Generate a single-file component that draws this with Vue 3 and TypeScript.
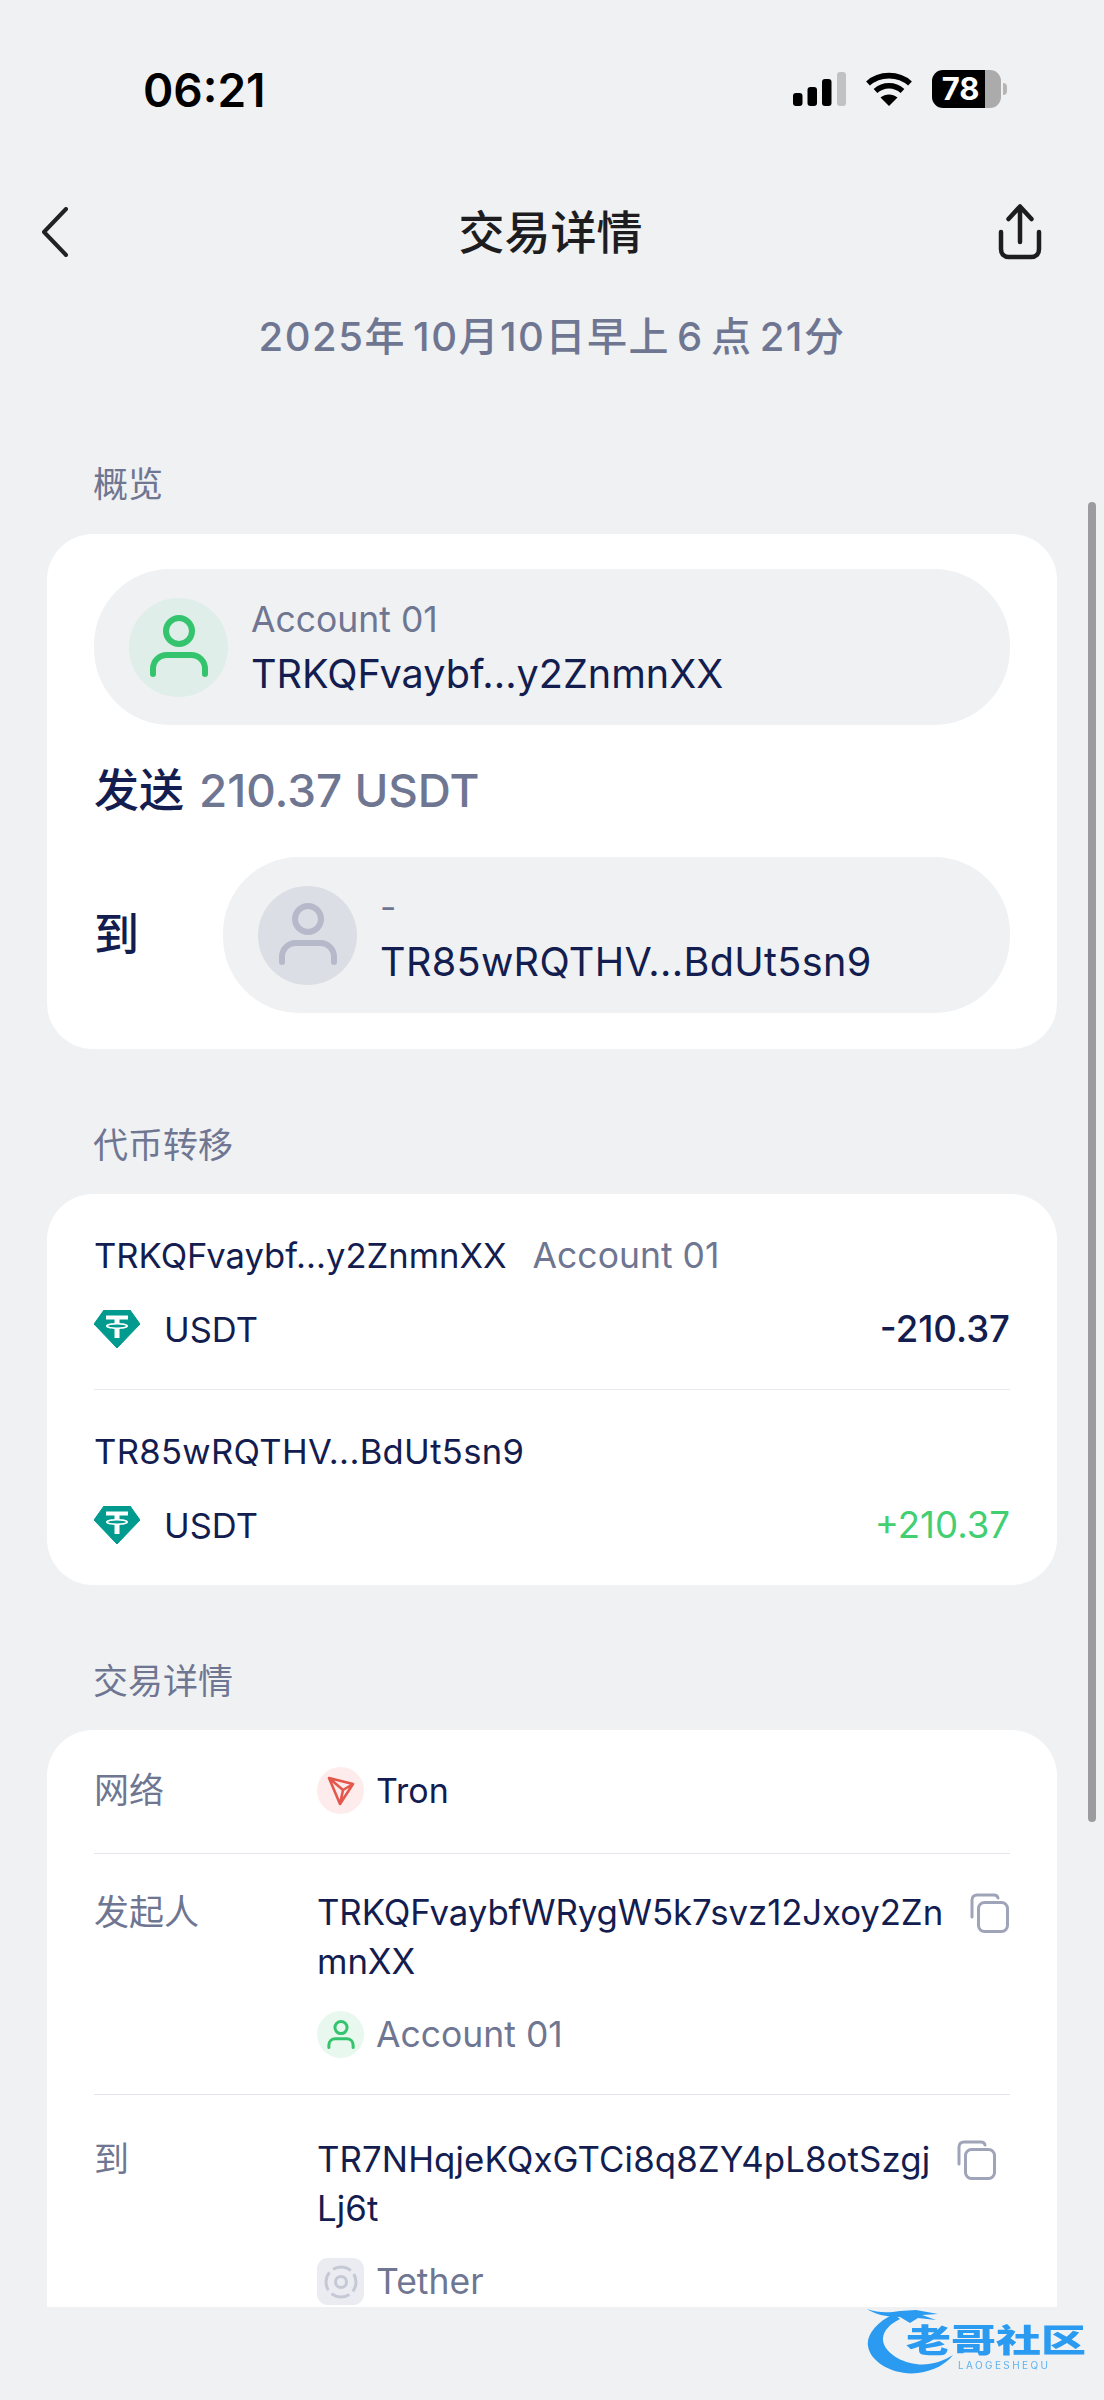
<script setup lang="ts">
const transfers = [
  { address: 'TRKQFvaybf...y2ZnmnXX', tag: 'Account 01', amount: '-210.37', income: false },
  { address: 'TR85wRQTHV...BdUt5sn9', tag: '', amount: '+210.37', income: true },
]
</script>

<template>
  <div class="page">
    <header class="status">
      <span class="time">06:21</span>
      <div class="status-icons">
        <svg class="signal" width="53" height="34" viewBox="0 0 53 34">
          <rect x="0" y="21" width="9.5" height="13" rx="3" fill="#000" />
          <rect x="14.5" y="15" width="9.5" height="19" rx="3" fill="#000" />
          <rect x="29" y="7" width="9.5" height="27" rx="3" fill="#000" />
          <rect x="44" y="0" width="9" height="34" rx="3" fill="#c2c2c2" />
        </svg>
        <svg class="wifi" width="46" height="34" viewBox="0 0 46 34">
          <path d="M2 11.5C13.5 1 32.5 1 44 11.5" fill="none" stroke="#000" stroke-width="5.6" />
          <path d="M9.5 19C17.5 12 28.5 12 36.5 19" fill="none" stroke="#000" stroke-width="5.6" />
          <path d="M23 34L14.5 25.5C19.5 21.5 26.5 21.5 31.5 25.5Z" fill="#000" />
        </svg>
        <div class="battery">
          <div class="battery-fill"><span>78</span></div>
          <div class="battery-rest"></div>
          <div class="battery-nub"></div>
        </div>
      </div>
    </header>

    <nav class="nav">
      <svg width="28" height="50" viewBox="0 0 28 50">
        <path d="M25 2L3 25L25 48" fill="none" stroke="#222" stroke-width="4" stroke-linecap="round" stroke-linejoin="round" />
      </svg>
      <h1 class="title">交易详情</h1>
      <svg width="46" height="56" viewBox="0 0 46 56">
        <path d="M22 38V3M10.500 15L22 2.500L33.500 15" fill="none" stroke="#1d1d1f" stroke-width="4.500" stroke-linecap="round" stroke-linejoin="round" />
        <path d="M3 28V45C3 50 6 53 11 53H33C38 53 41 50 41 45V28" fill="none" stroke="#1d1d1f" stroke-width="4.500" stroke-linecap="round" />
      </svg>
    </nav>

    <p class="date">2025年 10月10日早上 6 点 21分</p>

    <main class="scroll">
      <h2 class="section-title first">概览</h2>
      <section class="card overview">
        <div class="pill">
          <div class="avatar green">
            <svg width="60" height="66" viewBox="0 0 60 66">
              <circle cx="30" cy="17" r="13" fill="none" stroke="#35c46e" stroke-width="6" />
              <path d="M4 60V55C4 47 10 41 18 41H42C50 41 56 47 56 55V60" fill="none" stroke="#35c46e" stroke-width="6" stroke-linecap="round" />
            </svg>
          </div>
          <div class="pill-text">
            <span class="muted">Account 01</span>
            <span class="strong">TRKQFvaybf...y2ZnmnXX</span>
          </div>
        </div>
        <div class="send">
          <span class="strong-cjk">发送</span>
          <span class="send-amount">210.37 USDT</span>
        </div>
        <div class="to-row">
          <span class="strong-cjk to-label">到</span>
          <div class="pill grow">
            <div class="avatar grey">
              <svg width="60" height="66" viewBox="0 0 60 66">
                <circle cx="30" cy="17" r="13" fill="none" stroke="#b5b9c9" stroke-width="6" />
                <path d="M4 60V55C4 47 10 41 18 41H42C50 41 56 47 56 55V60" fill="none" stroke="#b5b9c9" stroke-width="6" stroke-linecap="round" />
              </svg>
            </div>
            <div class="pill-text">
              <span class="muted">-</span>
              <span class="strong wide">TR85wRQTHV...BdUt5sn9</span>
            </div>
          </div>
        </div>
      </section>

      <h2 class="section-title">代币转移</h2>
      <section class="card transfers">
        <div v-for="t in transfers" :key="t.address" class="transfer">
          <div class="transfer-top">
            <span class="strong" :class="{ wide: t.income }">{{ t.address }}</span>
            <span v-if="t.tag" class="muted">{{ t.tag }}</span>
          </div>
          <div class="transfer-bottom">
            <svg class="tether" width="46" height="38" viewBox="0 0 46 38">
              <path d="M10 0H36L46 14L23 38L0 14Z" fill="#009a8e" stroke="#009a8e" stroke-linejoin="round" />
              <path d="M12 5.500H34V9.500H25.500V13C30 13.300 34 14.200 34 16C34 17.800 30 18.700 25.500 19V28H20.500V19C16 18.700 12 17.800 12 16C12 14.200 16 13.300 20.500 13V9.500H12Z" fill="#fff" />
              <ellipse cx="23" cy="16" rx="9" ry="1.400" fill="#009a8e" />
            </svg>
            <span class="strong symbol">USDT</span>
            <span class="amount" :class="{ income: t.income }">{{ t.amount }}</span>
          </div>
        </div>
      </section>

      <h2 class="section-title">交易详情</h2>
      <section class="card details">
        <div class="row network">
          <span class="row-label">网络</span>
          <div class="row-value inline">
            <span class="mini tron">
              <svg width="28" height="30" viewBox="0 0 28 30">
                <path d="M2 2L26 8L13 28Z M2 2L16 14L13 28 M26 8L16 14" fill="none" stroke="#e4574c" stroke-width="2.600" stroke-linejoin="round" />
              </svg>
            </span>
            <span class="strong">Tron</span>
          </div>
        </div>
        <div class="row">
          <span class="row-label">发起人</span>
          <div class="row-value">
            <div class="addr-line">
              <div class="addr tight">
                <span>TRKQFvaybfWRygW5k7svz12Jxoy2Zn</span>
                <span>mnXX</span>
              </div>
              <svg class="copy" width="40" height="40" viewBox="0 0 40 40">
                <path d="M3 24V7C3 4 5 2 8 2H25C27 2 28.500 3 29 5" fill="none" stroke="#a0a4b8" stroke-width="3" stroke-linecap="round" />
                <rect x="9.500" y="9.500" width="29" height="29" rx="6" fill="none" stroke="#a0a4b8" stroke-width="3" />
              </svg>
            </div>
            <div class="inline tag-line">
              <span class="mini pale-green">
                <svg width="28" height="32" viewBox="0 0 60 66">
                  <circle cx="30" cy="17" r="13" fill="none" stroke="#35c46e" stroke-width="6.500" />
                  <path d="M4 60V55C4 47 10 41 18 41H42C50 41 56 47 56 55V60" fill="none" stroke="#35c46e" stroke-width="6.500" stroke-linecap="round" />
                </svg>
              </span>
              <span class="muted">Account 01</span>
            </div>
          </div>
        </div>
        <div class="row last">
          <span class="row-label">到</span>
          <div class="row-value">
            <div class="addr-line">
              <div class="addr loose">
                <span>TR7NHqjeKQxGTCi8q8ZY4pL8otSzgj</span>
                <span>Lj6t</span>
              </div>
              <svg class="copy" width="40" height="40" viewBox="0 0 40 40">
                <path d="M3 24V7C3 4 5 2 8 2H25C27 2 28.500 3 29 5" fill="none" stroke="#a0a4b8" stroke-width="3" stroke-linecap="round" />
                <rect x="9.500" y="9.500" width="29" height="29" rx="6" fill="none" stroke="#a0a4b8" stroke-width="3" />
              </svg>
            </div>
            <div class="inline tag-line">
              <span class="mini tether-chip">
                <svg width="36" height="36" viewBox="0 0 36 36">
                  <circle cx="18" cy="18" r="15" fill="none" stroke="#c5c8d5" stroke-width="3" stroke-dasharray="19 4.600" stroke-dashoffset="9" />
                  <circle cx="18" cy="18" r="5.500" fill="none" stroke="#c5c8d5" stroke-width="3" />
                </svg>
              </span>
              <span class="muted">Tether</span>
            </div>
          </div>
        </div>
      </section>
    </main>

    <div class="scrollbar"></div>

    <div class="watermark">
      <svg width="110" height="90" viewBox="0 0 110 90">
        <path d="M28 14C10 22 0 36 2 46C4 62 28 76 52 73C68 71 80 64 87 55C76 62 62 66 50 64C32 62 16 50 17 38C18 30 24 24 34 19Z" fill="#2a9bf0" />
        <path d="M1 9C12 13 22 13 34 11L50 10L72 14L56 15L70 20L52 18L44 23L34 17C20 17 8 14 1 9Z" fill="#2a9bf0" />
      </svg>
      <span class="wm-cn">老哥社区</span>
      <span class="wm-en">LAOGESHEQU</span>
    </div>
  </div>
</template>

<style>
html, body { margin: 0; padding: 0; background: #f0f1f3; }
</style>

<style scoped>
.page {
  position: relative;
  width: 1104px;
  height: 2400px;
  overflow: hidden;
  background: #f0f1f3;
  font-family: Inter, "Noto Sans CJK SC", sans-serif;
  color: #131d4f;
}
.status {
  height: 180px;
  box-sizing: border-box;
  padding: 62px 97px 0 143px;
  display: flex;
  justify-content: space-between;
  align-items: flex-start;
}
.time {
  font-size: 46px;
  line-height: 56px;
  font-weight: 600;
  color: #000;
}
.status-icons {
  display: flex;
  align-items: flex-start;
  gap: 20px;
  padding-top: 8px;
}
.wifi { margin-top: 2px; }
.signal { margin-top: 2px; }
.battery {
  display: flex;
  width: 75px;
  height: 38px;
  align-items: center;
}
.battery-fill {
  width: 54px;
  height: 38px;
  background: #000;
  border-radius: 11px 0 0 11px;
  display: flex;
  align-items: center;
  justify-content: center;
  padding-left: 4px;
  box-sizing: border-box;
}
.battery-fill span {
  color: #fff;
  font-size: 31px;
  font-weight: 700;
  line-height: 38px;
}
.battery-rest {
  width: 16px;
  height: 38px;
  background: #ababab;
  border-radius: 0 11px 11px 0;
}
.battery-nub {
  width: 4px;
  height: 12px;
  margin-left: 2px;
  background: #b5b5b5;
  border-radius: 0 6px 6px 0;
}
.nav {
  height: 80px;
  margin-top: 12px;
  box-sizing: border-box;
  padding: 0 60px 0 41px;
  display: flex;
  align-items: center;
  justify-content: space-between;
}
.title {
  margin: 0 0 0 34px;
  font-size: 46px;
  line-height: 60px;
  font-weight: 500;
  color: #1d1d1f;
}
.date {
  margin: 39px 0 0;
  text-align: center;
  font-size: 40px;
  line-height: 52px;
  letter-spacing: 1.500px;
  word-spacing: -5px;
  color: #6f7692;
  font-weight: 500;
}
.scroll {
  position: absolute;
  left: 47px;
  right: 47px;
  top: 0;
  height: 2307px;
  overflow: hidden;
  padding-top: 460px;
  box-sizing: border-box;
}
.section-title {
  margin: 72px 0 25px 46px;
  font-size: 35px;
  line-height: 48px;
  font-weight: 400;
  color: #6f7692;
}
.section-title.first { margin-top: 0; margin-bottom: 26px; }
.card {
  background: #fff;
  border-radius: 46px;
  box-sizing: border-box;
  padding: 0 47px;
}
.overview { height: 515px; padding-top: 35px; }
.pill {
  display: flex;
  align-items: center;
  gap: 23px;
  height: 156px;
  padding-left: 35px;
  background: #f0f1f3;
  border-radius: 76px;
}
.grow { flex: 1; }
.avatar {
  width: 99px;
  height: 99px;
  border-radius: 50%;
  display: flex;
  align-items: center;
  justify-content: center;
  flex: none;
}
.avatar.green { background: #dfeee8; }
.avatar.grey { background: #dcdee6; }
.pill-text {
  display: flex;
  flex-direction: column;
  gap: 6px;
}
.pill-text > span { line-height: 49px; }
.muted {
  font-size: 35.500px;
  line-height: 49px;
  color: #6f7692;
}
.strong {
  font-size: 39.600px;
  line-height: 49px;
  color: #131d4f;
}
.wide { letter-spacing: 0.330px; }
.send {
  display: flex;
  align-items: center;
  gap: 15px;
  height: 60px;
  margin-top: 36px;
}
.strong-cjk {
  font-size: 45px;
  line-height: 60px;
  font-weight: 500;
  color: #131d4f;
}
.send-amount {
  font-size: 45.800px;
  line-height: 60px;
  font-weight: 500;
  color: #6f7692;
}
.to-row {
  display: flex;
  align-items: center;
  margin-top: 36px;
}
.to-label { width: 129px; flex: none; }
.transfers { height: 391px; }
.transfer { height: 195px; box-sizing: border-box; padding-top: 36px; }
.transfer + .transfer { border-top: 1px solid #e9eaef; height: 196px; }
.transfer-top {
  display: flex;
  gap: 26px;
  align-items: center;
  height: 50px;
}
.transfer-top .strong { font-size: 34.600px; }
.transfer-bottom {
  display: flex;
  align-items: center;
  height: 50px;
  margin-top: 24px;
}
.tether { margin-right: 24px; }
.symbol.symbol { flex: 1; font-size: 34.500px; }
.amount {
  font-size: 36.600px;
  font-weight: 500;
  color: #131d4f;
}
.amount.income { color: #42cf72; font-weight: 400; }
.details { padding-bottom: 40px; }
.row {
  display: flex;
  padding: 34px 0 35px;
  border-top: 1px solid #e3e4ec;
}
.row:first-child { border-top: none; }
.network { padding: 36px 0 38px; }
.last { padding-top: 40px; }
.row-label {
  width: 223px;
  flex: none;
  font-size: 35px;
  line-height: 49px;
  color: #6f7692;
}
.row-value { flex: 1; min-width: 0; }
.inline {
  display: flex;
  align-items: center;
  gap: 12px;
}
.row-value .strong { font-size: 34px; }
.mini {
  width: 47px;
  height: 47px;
  border-radius: 50%;
  display: flex;
  align-items: center;
  justify-content: center;
  flex: none;
}
.tron { background: #fdeceb; }
.pale-green { background: #e9f8ef; }
.tether-chip { background: #ebecf1; border-radius: 11px; }
.addr-line {
  display: flex;
  align-items: flex-start;
  gap: 26px;
}
.addr {
  font-size: 34.800px;
  line-height: 49px;
  color: #131d4f;
  white-space: nowrap;
}
.addr.tight { letter-spacing: -0.100px; }
.addr.loose { letter-spacing: 0.100px; }
.addr span { display: block; }
.copy { flex: none; margin-top: 5px; }
.tag-line { margin-top: 24px; }
.scrollbar {
  position: absolute;
  left: 1088px;
  top: 502px;
  width: 8px;
  height: 1320px;
  border-radius: 4px;
  background: #9c9ca0;
}
.watermark {
  position: absolute;
  left: 866px;
  top: 2300px;
  width: 225px;
  height: 80px;
  filter: blur(0.7px);
}
.watermark svg { position: absolute; left: 0; top: 0; }
.wm-cn {
  position: absolute;
  left: 40px;
  top: 22px;
  font-size: 45px;
  line-height: 36px;
  font-weight: 900;
  color: #2a9bf0;
  white-space: nowrap;
  transform: scaleY(0.72);
}
.wm-en {
  position: absolute;
  left: 92px;
  top: 60px;
  font-size: 10px;
  line-height: 10px;
  letter-spacing: 2.400px;
  color: #5cb3f2;
  white-space: nowrap;
}
</style>
